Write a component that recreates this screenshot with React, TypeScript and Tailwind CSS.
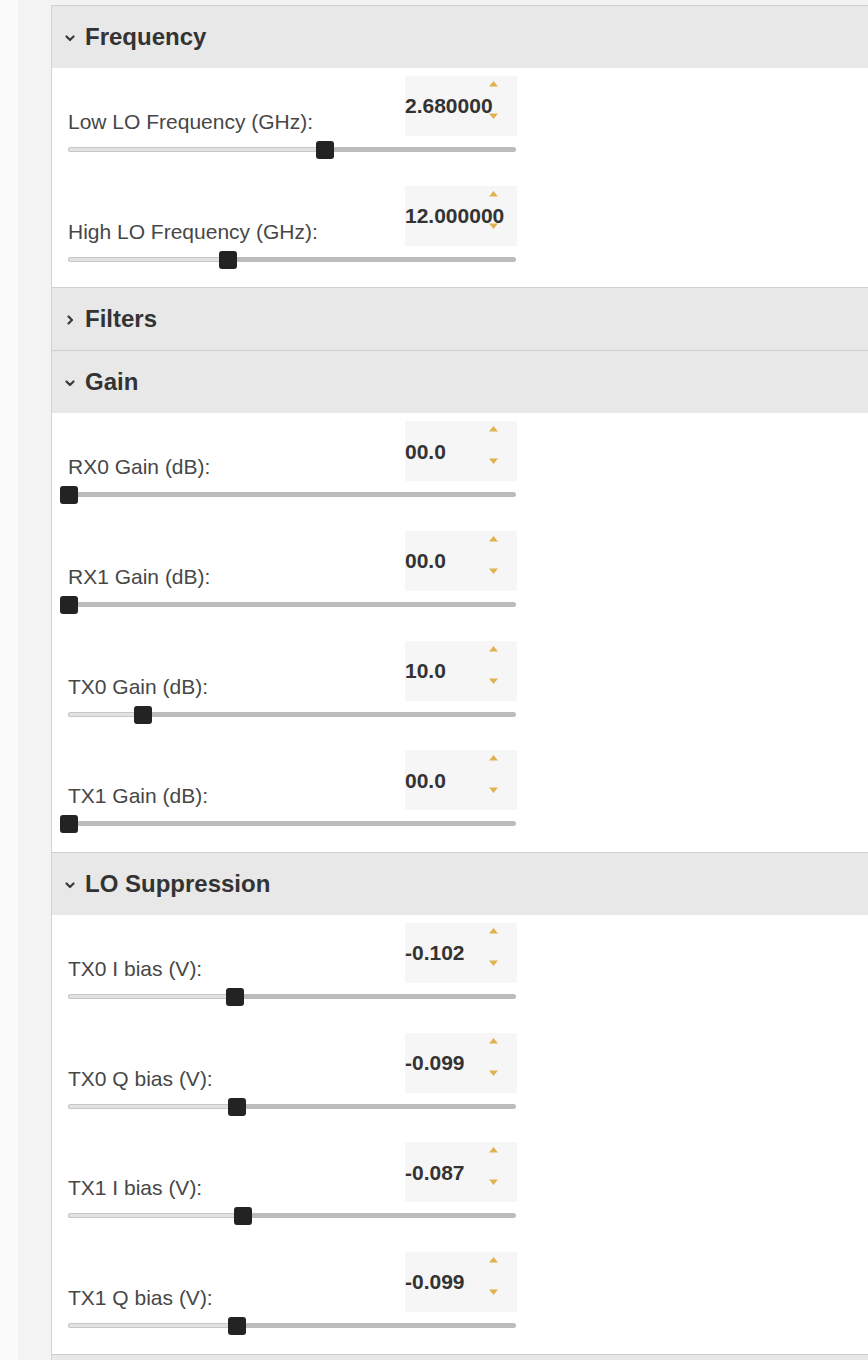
import React from 'react'

type Item = { label: string; value: string; frac: number }
type Section = { title: string; open: boolean; items: Item[] }

const sections: Section[] = [
  {
    title: 'Frequency',
    open: true,
    items: [
      { label: 'Low LO Frequency (GHz):', value: '2.680000', frac: 0.574 },
      { label: 'High LO Frequency (GHz):', value: '12.000000', frac: 0.357 },
    ],
  },
  { title: 'Filters', open: false, items: [] },
  {
    title: 'Gain',
    open: true,
    items: [
      { label: 'RX0 Gain (dB):', value: '00.0', frac: 0.002 },
      { label: 'RX1 Gain (dB):', value: '00.0', frac: 0.002 },
      { label: 'TX0 Gain (dB):', value: '10.0', frac: 0.167 },
      { label: 'TX1 Gain (dB):', value: '00.0', frac: 0.002 },
    ],
  },
  {
    title: 'LO Suppression',
    open: true,
    items: [
      { label: 'TX0 I bias (V):', value: '-0.102', frac: 0.373 },
      { label: 'TX0 Q bias (V):', value: '-0.099', frac: 0.377 },
      { label: 'TX1 I bias (V):', value: '-0.087', frac: 0.39 },
      { label: 'TX1 Q bias (V):', value: '-0.099', frac: 0.377 },
    ],
  },
]

function Chevron({ open }: { open: boolean }) {
  if (open) {
    return (
      <svg width="10" height="7" viewBox="0 0 10 7" className="mr-[10px] mt-[3px]">
        <path d="M1.5 1.5 L5 5 L8.5 1.5" fill="none" stroke="#3a3a3a" strokeWidth="2.2" strokeLinecap="round" strokeLinejoin="round" />
      </svg>
    )
  }
  return (
    <svg width="10" height="10" viewBox="0 0 10 10" className="mr-[10px] mt-[2px]">
      <path d="M3.5 1.5 L7 5 L3.5 8.5" fill="none" stroke="#3a3a3a" strokeWidth="2.2" strokeLinecap="round" strokeLinejoin="round" />
    </svg>
  )
}

function Spinner() {
  return (
    <>
      <svg width="11" height="7" viewBox="0 0 11 7" className="absolute right-[18px] top-[4px]">
        <path d="M1 6.5 L5.5 1 L10 6.5 Z" fill="#e0b24e" />
      </svg>
      <svg width="11" height="7" viewBox="0 0 11 7" className="absolute right-[18px] top-[37px]">
        <path d="M1 0.5 L5.5 6 L10 0.5 Z" fill="#e0b24e" />
      </svg>
    </>
  )
}

function SliderRow({ item }: { item: Item }) {
  return (
    <div className="h-[109.67px] pt-[8px] w-[449px]">
      <div className="flex">
        <div className="flex-1 pt-[34px] text-[21px] leading-[24px] text-[#474747]">{item.label}</div>
        <div className="relative w-[112px] h-[60px] bg-[#f6f6f6]">
          <div className="h-full flex items-center text-[21px] font-bold text-[#333] whitespace-nowrap">{item.value}</div>
          <Spinner />
        </div>
      </div>
      <div className="relative mt-[5px] h-[18px] w-[448px]">
        <div className="absolute left-0 right-0 top-[6px] h-[5px] rounded-full bg-[#bcbcbc]" />
        <div
          className="absolute left-0 top-[6px] h-[5px] rounded-full bg-[#e2e2e2] border border-[#c8c8c8]"
          style={{ width: `${item.frac * 100}%` }}
        />
        <div
          className="absolute top-0 w-[18px] h-[18px] rounded-[3px] bg-[#232323]"
          style={{ left: `calc(${item.frac * 100}% - 9px)` }}
        />
      </div>
    </div>
  )
}

export default function App() {
  return (
    <div
      className="w-[868px] h-[1360px] overflow-hidden bg-[#f3f3f3] flex"
      style={{ fontFamily: '"Liberation Sans", Arial, sans-serif' }}
    >
      <div className="w-[18px] bg-[#fafafa]" />
      <div className="flex-1 pl-[33px] pt-[5px]">
        <div className="bg-white border-l border-[#d2d2d2] h-full">
          {sections.map((s) => (
            <div key={s.title} className="border-t border-[#cfcfcf]">
              <div className="h-[62px] bg-[#e8e8e8] flex items-center pl-[13px] text-[24px] font-bold text-[#333]">
                <Chevron open={s.open} />
                <span>{s.title}</span>
              </div>
              {s.open && (
                <div className="pl-[16px]">
                  {s.items.map((it) => (
                    <SliderRow key={it.label} item={it} />
                  ))}
                </div>
              )}
            </div>
          ))}
          <div className="border-t border-[#cfcfcf] h-[62px] bg-[#e8e8e8]" />
        </div>
      </div>
    </div>
  )
}
